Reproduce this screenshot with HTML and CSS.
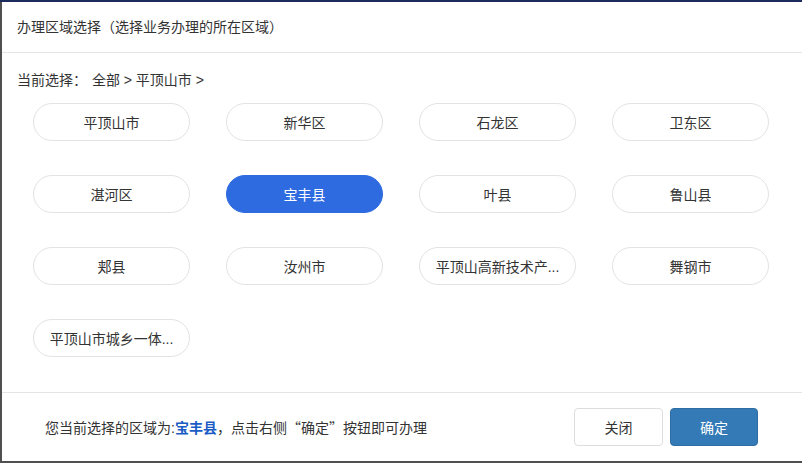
FILE: index.html
```html
<!DOCTYPE html>
<html lang="zh-CN">
<head>
    <meta charset="UTF-8">
    <meta name="viewport" content="width=device-width, initial-scale=1.0">
    <title>办理区域选择</title>
    <link rel="stylesheet" href="styles.css">
</head>
<body>
    <div class="modal">
        <div class="modal-header">
            <h4 class="modal-title">办理区域选择（选择业务办理的所在区域）</h4>
        </div>

        <div class="modal-body">
            <div class="crumbs">
                <span class="crumbs-label">当前选择：</span>
                <a class="crumb">全部</a> &gt; <a class="crumb">平顶山市</a> &gt;
            </div>

            <div class="area-grid">
                <button class="area-item">平顶山市</button>
                <button class="area-item">新华区</button>
                <button class="area-item">石龙区</button>
                <button class="area-item">卫东区</button>
                <button class="area-item">湛河区</button>
                <button class="area-item active">宝丰县</button>
                <button class="area-item">叶县</button>
                <button class="area-item">鲁山县</button>
                <button class="area-item">郏县</button>
                <button class="area-item">汝州市</button>
                <button class="area-item" title="平顶山高新技术产业开发区">平顶山高新技术产...</button>
                <button class="area-item">舞钢市</button>
                <button class="area-item" title="平顶山市城乡一体化示范区">平顶山市城乡一体...</button>
            </div>
        </div>

        <div class="modal-footer">
            <p class="tip">您当前选择的区域为:<b class="picked">宝丰县</b>，点击右侧<span class="cjk">“确定”</span>按钮即可办理</p>
            <div class="actions">
                <button class="btn btn-default">关闭</button>
                <button class="btn btn-primary">确定</button>
            </div>
        </div>
    </div>
</body>
</html>
```

FILE: styles.css
```css
body {
    margin: 0;
    padding: 2px 0 0 2px;
    font-family: "Liberation Sans", "Noto Sans CJK SC", sans-serif;
    font-size: 14px;
    color: #333;
    background: linear-gradient(#1d2a5c 0, #1d2a5c 2px, #4f4f4f 2px);
    height: 461px;
    overflow: hidden;
}

.modal {
    width: 800px;
    background-color: #fff;
}

.modal-header {
    height: 50px;
    display: flex;
    align-items: center;
    padding: 0 15px;
    border-bottom: 1px solid #e5e5e5;
}

.modal-title {
    margin: 0;
    font-size: 14px;
    font-weight: normal;
    line-height: 20px;
}

.modal-body {
    padding: 17px 15px 35px;
}

.crumbs {
    line-height: 20px;
}

.crumbs-label {
    margin-right: 1px;
}

.crumb {
    color: #333;
    cursor: pointer;
}

.area-grid {
    margin: 13px 0 0 16px;
    display: grid;
    grid-template-columns: repeat(4, 157px);
    grid-auto-rows: 38px;
    column-gap: 36px;
    row-gap: 34px;
}

.area-item {
    padding: 0 12px;
    font-family: inherit;
    font-size: 14px;
    color: #333;
    background-color: #fff;
    border: 1px solid #e3e3e3;
    border-radius: 19px;
    white-space: nowrap;
    overflow: hidden;
    text-overflow: ellipsis;
    cursor: pointer;
}

.area-item.active {
    color: #fff;
    background-color: #2e6ae0;
    border-color: #2e6ae0;
}

.modal-footer {
    height: 68px;
    display: flex;
    align-items: center;
    justify-content: space-between;
    padding: 0 44px 0 43px;
    border-top: 1px solid #e5e5e5;
}

.tip {
    margin: 0;
    line-height: 20px;
}

.cjk {
    font-family: "Noto Sans CJK SC", sans-serif;
}

.picked {
    color: #1a5cc4;
}

.actions {
    display: flex;
    gap: 7px;
}

.btn {
    width: 89px;
    height: 38px;
    font-family: inherit;
    font-size: 14px;
    border-radius: 4px;
    cursor: pointer;
}

.btn-default {
    color: #333;
    background-color: #fff;
    border: 1px solid #ddd;
}

.btn-primary {
    width: 88px;
    color: #fff;
    background-color: #337ab7;
    border: 1px solid #2e6da4;
}
```
